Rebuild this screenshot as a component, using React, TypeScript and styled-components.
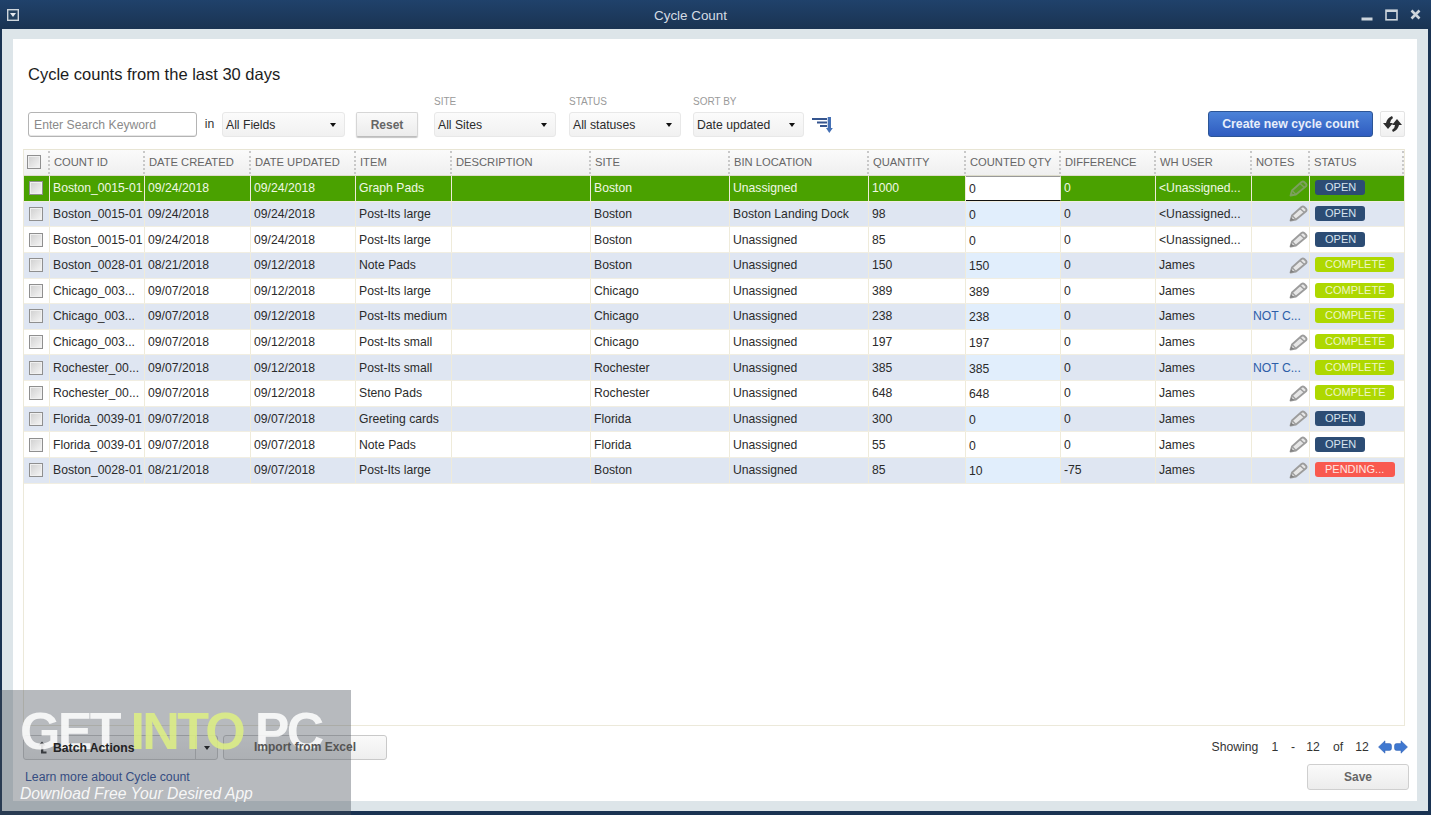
import React from "react";
import styled, { createGlobalStyle } from "styled-components";

const COLUMNS = "26px 95px 106px 105px 96px 139px 139px 139px 97px 95px 95px 96px 58px 1fr";

const GlobalStyle = createGlobalStyle`
  html, body {
    margin: 0;
    padding: 0;
    height: 100%;
    overflow: hidden;
    background: #1a3352;
  }
  body {
    font-family: "Liberation Sans", Arial, sans-serif;
    font-size: 12px;
    color: #2b2b2b;
  }
  #root {
    height: 100%;
  }
`;

const Frame = styled.div`
  position: relative;
  z-index: 0;
  display: flex;
  flex-direction: column;
  width: 1431px;
  height: 815px;
  overflow: hidden;
  background: #1a3352;
`;

const TitleBar = styled.div`
  display: flex;
  align-items: center;
  justify-content: space-between;
  height: 29px;
  flex: none;
  padding: 0 10px 0 7px;
  background: linear-gradient(#20426b, #1a3352);
`;

const TitleText = styled.div`
  position: absolute;
  left: 0;
  width: 1381px;
  top: 8px;
  text-align: center;
  font-size: 13.4px;
  line-height: 15px;
  color: #d5dce4;
`;

const WindowButtons = styled.div`
  display: flex;
  align-items: center;
  gap: 12px;
`;

const Body = styled.div`
  flex: 1;
  margin: 0 3px 4px 2px;
  padding: 10px 11px 10px 11px;
  background: #dde5e9;
  display: flex;
  min-height: 0;
`;

const Panel = styled.div`
  flex: 1;
  display: flex;
  flex-direction: column;
  padding: 25px 12px 0 10px;
  background: #fff;
  min-width: 0;
`;

const Heading = styled.h1`
  margin: 0 0 0 5px;
  font-size: 16.5px;
  line-height: 20px;
  font-weight: 400;
  color: #1c1c1c;
`;

const Toolbar = styled.div`
  display: flex;
  align-items: flex-end;
  height: 51px;
  margin-top: 2px;
  padding-left: 5px;
`;

const Field = styled.div<{ $left: number }>`
  display: flex;
  flex-direction: column;
  margin-left: ${(p) => p.$left}px;
`;

const FieldLabel = styled.label`
  font-size: 10px;
  line-height: 11px;
  height: 11px;
  margin-bottom: 5px;
  color: #9a9a9a;
`;

const SearchInput = styled.div`
  box-sizing: border-box;
  width: 169px;
  height: 25px;
  padding: 0 5px;
  border: 1px solid #b4b4b4;
  border-radius: 3px;
  font-size: 12.2px;
  line-height: 24px;
  color: #8a8a8a;
  box-shadow: inset 0 -1px 0 #e6e6e6;
`;

const InLabel = styled.span`
  width: 25px;
  height: 25px;
  line-height: 25px;
  text-align: center;
  font-size: 12.2px;
  color: #333;
`;

const Select = styled.div<{ $width: number }>`
  box-sizing: border-box;
  display: flex;
  align-items: center;
  justify-content: space-between;
  width: ${(p) => p.$width}px;
  height: 25px;
  padding: 0 8px 0 3px;
  border: 1px solid #e8e8e8;
  border-radius: 3px;
  background: linear-gradient(#fbfbfb, #f1f1f1);
  font-size: 12.2px;
  color: #2b2b2b;
`;

const Caret = styled.span`
  width: 0;
  height: 0;
  border-left: 3.5px solid transparent;
  border-right: 3.5px solid transparent;
  border-top: 4px solid #111;
`;

const ResetButton = styled.div`
  box-sizing: border-box;
  width: 62px;
  height: 25px;
  margin-left: 11px;
  border: 1px solid #d6d6d6;
  border-bottom-color: #bdbdbd;
  border-radius: 2px;
  background: linear-gradient(#fafafa, #ececec);
  box-shadow: 0 1px 1px #c4c4c4;
  text-align: center;
  line-height: 24px;
  font-size: 12px;
  font-weight: 700;
  color: #666;
`;

const SortIcon = styled.svg`
  margin: 0 0 4px 8px;
  flex: none;
`;

const Spacer = styled.div`
  flex: 1;
`;

const CreateButton = styled.div`
  box-sizing: border-box;
  width: 165px;
  height: 26px;
  border: 1px solid #2c5596;
  border-radius: 3px;
  background: linear-gradient(#4b82d8, #2f5cc0);
  text-align: center;
  line-height: 24px;
  font-size: 12.3px;
  font-weight: 700;
  color: #e8eefb;
`;

const RefreshButton = styled.div`
  box-sizing: border-box;
  display: flex;
  align-items: center;
  justify-content: center;
  width: 25px;
  height: 26px;
  margin-left: 7px;
  border: 1px solid #e4e4e4;
  border-radius: 2px;
  background: linear-gradient(#fff, #f0f0f0);
`;

const Table = styled.div`
  flex: 1;
  margin-top: 12px;
  border: 1px solid #ece9da;
  border-top-color: #e8e5d4;
  min-height: 0;
`;

const HeaderRow = styled.div`
  display: grid;
  grid-template-columns: ${COLUMNS};
  height: 25px;
  background: linear-gradient(#fbfbfb, #efefef);
  border-bottom: 1px solid #dddccb;
`;

const HeaderCell = styled.div`
  display: flex;
  align-items: center;
  padding: 0 0 2px 4px;
  border-right: 2px dotted #c8c8c8;
  margin: 1px 0;
  font-size: 11.2px;
  color: #666;
  white-space: nowrap;
  overflow: hidden;
`;

const HeaderCheck = styled(HeaderCell)`
  padding-left: 3px;
`;

const Row = styled.div<{ $tone: "green" | "blue" | "white" }>`
  display: grid;
  box-sizing: border-box;
  grid-template-columns: ${COLUMNS};
  height: 25.64px;
  border-bottom: 1px solid #f1eee2;
  color: ${(p) => (p.$tone === "green" ? "#f0f8e4" : "#2b2b2b")};
  background: ${(p) =>
    p.$tone === "green" ? "#4aa100" : p.$tone === "blue" ? "#dfe6f2" : "#fff"};
`;

const Cell = styled.div`
  display: flex;
  align-items: center;
  min-width: 0;
  padding-left: 3px;
  border-right: 1px solid #efebda;
  font-size: 12.2px;
  white-space: nowrap;
  overflow: hidden;
`;

const CheckCell = styled(Cell)`
  padding-left: 5px;
`;

const QtyCell = styled(Cell)<{ $tint: boolean; $editing: boolean }>`
  padding-top: 2px;
  box-sizing: border-box;
  background: ${(p) => (p.$editing ? "#fff" : p.$tint ? "#e1eefc" : "transparent")};
  color: #2b2b2b;
  border-bottom: ${(p) => (p.$editing ? "1px solid #111" : "0")};
  border-top: ${(p) => (p.$editing ? "1px solid #999" : "0")};
`;

const NotesCell = styled(Cell)`
  justify-content: flex-end;
  padding: 0 1px 0 0;
`;

const NotesText = styled.span`
  width: 100%;
  padding-left: 1px;
  color: #2d5ea8;
`;

const Box = styled.span`
  box-sizing: border-box;
  display: block;
  width: 14px;
  height: 14px;
  border: 1px solid #8f8f8f;
  background: linear-gradient(135deg, #cfcfcf, #f6f6f6);
  box-shadow: inset 0 0 0 1px #f0f0f0;
`;

const StatusCell = styled(Cell)`
  padding-left: 5px;
  border-right: 0;
`;

const PILL_COLORS = {
  OPEN: { bg: "#2c4c74", fg: "#d8e3ef", width: 50 },
  COMPLETE: { bg: "#aed800", fg: "#eef6c6", width: 79 },
  "PENDING...": { bg: "#f9594f", fg: "#ffe6e2", width: 80 },
};

const Pill = styled.span<{ $status: keyof typeof PILL_COLORS }>`
  display: block;
  box-sizing: border-box;
  width: ${(p) => PILL_COLORS[p.$status].width}px;
  height: 15px;
  margin-top: -1px;
  padding-left: 10px;
  border-radius: 3px;
  background: ${(p) => PILL_COLORS[p.$status].bg};
  color: ${(p) => PILL_COLORS[p.$status].fg};
  font-size: 11px;
  line-height: 14px;
`;

const Footer = styled.div`
  display: flex;
  justify-content: space-between;
  height: 75px;
  flex: none;
`;

const FooterLeft = styled.div`
  display: flex;
  flex-direction: column;
  padding: 9px 0 0 0;
`;

const ButtonRow = styled.div`
  display: flex;
  gap: 5px;
`;

const BatchButton = styled.div`
  box-sizing: border-box;
  display: flex;
  width: 195px;
  height: 25px;
  border: 1px solid #c9c9c9;
  border-radius: 3px;
  background: linear-gradient(#fafafa, #eeeeee);
`;

const BatchLabel = styled.div`
  flex: 1;
  display: flex;
  align-items: center;
  gap: 6px;
  padding-left: 13px;
  border-right: 1px solid #c9c9c9;
  font-size: 12.2px;
  font-weight: 700;
  color: #222;
`;

// sits above the watermark logo, as the button labels do in the screenshot
const OverLogo = styled.span`
  position: relative;
  z-index: 2;
`;

const BatchCaret = styled.div`
  width: 21px;
  display: flex;
  align-items: center;
  justify-content: center;
`;

const ImportButton = styled.div`
  box-sizing: border-box;
  width: 164px;
  height: 25px;
  border: 1px solid #c9c9c9;
  border-radius: 3px;
  background: linear-gradient(#fafafa, #eeeeee);
  text-align: center;
  line-height: 23px;
  font-size: 12px;
  font-weight: 700;
  color: #555;
`;

const LearnLink = styled.a`
  margin: 9px 0 0 2px;
  font-size: 12.3px;
  line-height: 16px;
  color: #2e4f9e;
`;

const FooterRight = styled.div`
  display: flex;
  flex-direction: column;
  align-items: flex-end;
  margin-right: -4px;
  padding-top: 13px;
`;

const Pager = styled.div`
  display: flex;
  align-items: center;
  height: 16px;
  margin-right: 1px;
  font-size: 12.2px;
  color: #333;
`;

const PagerPart = styled.span<{ $width: number }>`
  width: ${(p) => p.$width}px;
  text-align: center;
`;

const PagerArrows = styled.div`
  display: flex;
  gap: 2px;
`;

const SaveButton = styled.div`
  box-sizing: border-box;
  width: 102px;
  height: 26px;
  margin-top: 9px;
  border: 1px solid #cfcfcf;
  border-radius: 3px;
  background: linear-gradient(#fafafa, #ececec);
  text-align: center;
  line-height: 24px;
  font-size: 12px;
  font-weight: 700;
  color: #666;
`;

const Watermark = styled.div`
  position: absolute;
  left: 0;
  top: 690px;
  width: 351px;
  height: 125px;
  background: rgba(66, 74, 84, 0.38);
`;

const WatermarkLogo = styled.div`
  position: absolute;
  z-index: 1;
  left: 20px;
  top: 701px;
  font-size: 52px;
  line-height: 60px;
  font-weight: 700;
  letter-spacing: -2.7px;
  color: rgba(255, 255, 255, 0.85);
  white-space: nowrap;
`;

const LogoAccent = styled.span`
  color: rgba(222, 240, 130, 0.85);
`;

const WatermarkTagline = styled.div`
  position: absolute;
  left: 20px;
  top: 94px;
  font-size: 15.7px;
  line-height: 20px;
  font-style: italic;
  color: rgba(255, 255, 255, 0.9);
  white-space: nowrap;
`;

const HEADERS = [
  "COUNT ID",
  "DATE CREATED",
  "DATE UPDATED",
  "ITEM",
  "DESCRIPTION",
  "SITE",
  "BIN LOCATION",
  "QUANTITY",
  "COUNTED QTY",
  "DIFFERENCE",
  "WH USER",
  "NOTES",
  "STATUS",
];

type Status = keyof typeof PILL_COLORS;

interface RowData {
  id: string;
  created: string;
  updated: string;
  item: string;
  site: string;
  bin: string;
  qty: string;
  counted: string;
  diff: string;
  user: string;
  notes?: string;
  status: Status;
}

const ROWS: RowData[] = [
  { id: "Boston_0015-01", created: "09/24/2018", updated: "09/24/2018", item: "Graph Pads", site: "Boston", bin: "Unassigned", qty: "1000", counted: "0", diff: "0", user: "<Unassigned...", status: "OPEN" },
  { id: "Boston_0015-01", created: "09/24/2018", updated: "09/24/2018", item: "Post-Its large", site: "Boston", bin: "Boston Landing Dock", qty: "98", counted: "0", diff: "0", user: "<Unassigned...", status: "OPEN" },
  { id: "Boston_0015-01", created: "09/24/2018", updated: "09/24/2018", item: "Post-Its large", site: "Boston", bin: "Unassigned", qty: "85", counted: "0", diff: "0", user: "<Unassigned...", status: "OPEN" },
  { id: "Boston_0028-01", created: "08/21/2018", updated: "09/12/2018", item: "Note Pads", site: "Boston", bin: "Unassigned", qty: "150", counted: "150", diff: "0", user: "James", status: "COMPLETE" },
  { id: "Chicago_003...", created: "09/07/2018", updated: "09/12/2018", item: "Post-Its large", site: "Chicago", bin: "Unassigned", qty: "389", counted: "389", diff: "0", user: "James", status: "COMPLETE" },
  { id: "Chicago_003...", created: "09/07/2018", updated: "09/12/2018", item: "Post-Its medium", site: "Chicago", bin: "Unassigned", qty: "238", counted: "238", diff: "0", user: "James", notes: "NOT C...", status: "COMPLETE" },
  { id: "Chicago_003...", created: "09/07/2018", updated: "09/12/2018", item: "Post-Its small", site: "Chicago", bin: "Unassigned", qty: "197", counted: "197", diff: "0", user: "James", status: "COMPLETE" },
  { id: "Rochester_00...", created: "09/07/2018", updated: "09/12/2018", item: "Post-Its small", site: "Rochester", bin: "Unassigned", qty: "385", counted: "385", diff: "0", user: "James", notes: "NOT C...", status: "COMPLETE" },
  { id: "Rochester_00...", created: "09/07/2018", updated: "09/12/2018", item: "Steno Pads", site: "Rochester", bin: "Unassigned", qty: "648", counted: "648", diff: "0", user: "James", status: "COMPLETE" },
  { id: "Florida_0039-01", created: "09/07/2018", updated: "09/07/2018", item: "Greeting cards", site: "Florida", bin: "Unassigned", qty: "300", counted: "0", diff: "0", user: "James", status: "OPEN" },
  { id: "Florida_0039-01", created: "09/07/2018", updated: "09/07/2018", item: "Note Pads", site: "Florida", bin: "Unassigned", qty: "55", counted: "0", diff: "0", user: "James", status: "OPEN" },
  { id: "Boston_0028-01", created: "08/21/2018", updated: "09/07/2018", item: "Post-Its large", site: "Boston", bin: "Unassigned", qty: "85", counted: "10", diff: "-75", user: "James", status: "PENDING..." },
];

const PencilIcon = ({ faded }: { faded?: boolean }) => {
  const line = faded ? "#7da05f" : "#9c9c9c";
  return (
    <svg width="19" height="17" viewBox="0 0 19 17">
      <path
        d="M1.5 15.5 L3 10.5 L12.5 2 Q14 1 15.2 2 L17.2 4 Q18 5.2 17 6.3 L7 14.5 Z"
        fill={faded ? "#569f1c" : "#e6e6e6"}
        stroke={line}
        strokeWidth="1.8"
        strokeLinejoin="round"
      />
      <path d="M3 10.5 L7 14.5 M11 3.5 L15.5 7.6" stroke={line} strokeWidth="1.3" fill="none" />
      <path d="M1 16 L2.2 12.4 L5 15 Z" fill={faded ? "#7da05f" : "#808080"} />
    </svg>
  );
};

const ArrowIcon = ({ flip }: { flip?: boolean }) => (
  <svg width="14" height="14" viewBox="0 0 14 14" style={flip ? { transform: "scaleX(-1)" } : undefined}>
    <path d="M0.5 7 L7 0.8 V3.6 H11.5 Q13.5 3.6 13.5 5.6 V8.4 Q13.5 10.4 11.5 10.4 H7 V13.2 Z" fill="#3f78d0" stroke="#2f5fb0" strokeWidth="0.5" />
  </svg>
);

export default function App() {
  return (
    <Frame>
      <GlobalStyle />
      <TitleBar>
        <svg width="12" height="12" viewBox="0 0 12 12">
          <rect x="0.7" y="0.7" width="10.6" height="10.6" fill="#24425f" stroke="#cfd6dc" strokeWidth="1.4" />
          <path d="M3 4 H9 L6 8 Z" fill="#e6eaee" />
        </svg>
        <TitleText>Cycle Count</TitleText>
        <WindowButtons>
          <svg width="12" height="12" viewBox="0 0 12 12">
            <rect x="0.5" y="8.5" width="11" height="3" fill="#cdd5dc" />
          </svg>
          <svg width="13" height="12" viewBox="0 0 13 12">
            <rect x="1" y="1.2" width="11" height="9.6" fill="none" stroke="#cdd5dc" strokeWidth="1.6" />
            <rect x="1" y="1" width="11" height="2" fill="#cdd5dc" />
          </svg>
          <svg width="11" height="11" viewBox="0 0 11 11">
            <path d="M1.5 1.5 L9.5 9.5 M9.5 1.5 L1.5 9.5" stroke="#cdd5dc" strokeWidth="2.6" />
          </svg>
        </WindowButtons>
      </TitleBar>
      <Body>
        <Panel>
          <Heading>Cycle counts from the last 30 days</Heading>
          <Toolbar>
            <SearchInput>Enter Search Keyword</SearchInput>
            <InLabel>in</InLabel>
            <Select $width={123}>
              All Fields
              <Caret />
            </Select>
            <ResetButton>Reset</ResetButton>
            <Field $left={16}>
              <FieldLabel>SITE</FieldLabel>
              <Select $width={122}>
                All Sites
                <Caret />
              </Select>
            </Field>
            <Field $left={13}>
              <FieldLabel>STATUS</FieldLabel>
              <Select $width={112}>
                All statuses
                <Caret />
              </Select>
            </Field>
            <Field $left={12}>
              <FieldLabel>SORT BY</FieldLabel>
              <Select $width={111}>
                Date updated
                <Caret />
              </Select>
            </Field>
            <SortIcon width="21" height="17" viewBox="0 0 21 17">
              <path d="M0 2 H15 V4 H0 Z M5 5.5 H15 V7.5 H5 Z M8 9 H15 V11 H8 Z" fill="#35558f" />
              <path d="M15.7 1 H19 V12 H20.8 L17.3 17 L14 12 H15.7 Z" fill="#4570b4" />
            </SortIcon>
            <Spacer />
            <CreateButton>Create new cycle count</CreateButton>
            <RefreshButton>
              <svg width="19" height="18" viewBox="0 0 19 18">
                <path d="M0 8 H3 Q4 3 9 1 L10 3 Q7 5 7 8 H10 L5 14 Z" fill="#2e2e2e" />
                <path d="M19 10 H16 Q15 15 10 17 L9 15 Q12 13 12 10 H9 L14 4 Z" fill="#2e2e2e" />
              </svg>
            </RefreshButton>
          </Toolbar>
          <Table>
            <HeaderRow>
              <HeaderCheck>
                <Box />
              </HeaderCheck>
              {HEADERS.map((h) => (
                <HeaderCell key={h}>{h}</HeaderCell>
              ))}
            </HeaderRow>
            {ROWS.map((r, i) => {
              const selected = i === 0;
              const tone = selected ? "green" : i % 2 === 1 ? "blue" : "white";
              return (
                <Row key={i} $tone={tone}>
                  <CheckCell>
                    <Box />
                  </CheckCell>
                  <Cell>{r.id}</Cell>
                  <Cell>{r.created}</Cell>
                  <Cell>{r.updated}</Cell>
                  <Cell>{r.item}</Cell>
                  <Cell />
                  <Cell>{r.site}</Cell>
                  <Cell>{r.bin}</Cell>
                  <Cell>{r.qty}</Cell>
                  <QtyCell $tint={tone === "blue"} $editing={selected}>
                    {r.counted}
                  </QtyCell>
                  <Cell>{r.diff}</Cell>
                  <Cell>{r.user}</Cell>
                  <NotesCell>
                    {r.notes ? <NotesText>{r.notes}</NotesText> : <PencilIcon faded={selected} />}
                  </NotesCell>
                  <StatusCell>
                    <Pill $status={r.status}>{r.status}</Pill>
                  </StatusCell>
                </Row>
              );
            })}
          </Table>
          <Footer>
            <FooterLeft>
              <ButtonRow>
                <BatchButton>
                  <BatchLabel>
                    <svg width="10" height="13" viewBox="0 0 10 13">
                      <path d="M5 0.5 L8.5 4.5 H6.3 V10.5 H9.5 V12.5 H4 V4.5 H1.5 Z" fill="#333" />
                    </svg>
                    <OverLogo>Batch Actions</OverLogo>
                  </BatchLabel>
                  <BatchCaret>
                    <Caret />
                  </BatchCaret>
                </BatchButton>
                <ImportButton>
                  <OverLogo>Import from Excel</OverLogo>
                </ImportButton>
              </ButtonRow>
              <LearnLink>Learn more about Cycle count</LearnLink>
            </FooterLeft>
            <FooterRight>
              <Pager>
                <PagerPart $width={50}>Showing</PagerPart>
                <PagerPart $width={30}>1</PagerPart>
                <PagerPart $width={6}>-</PagerPart>
                <PagerPart $width={34}>12</PagerPart>
                <PagerPart $width={16}>of</PagerPart>
                <PagerPart $width={32}>12</PagerPart>
                <PagerArrows>
                  <ArrowIcon />
                  <ArrowIcon flip />
                </PagerArrows>
              </Pager>
              <SaveButton>Save</SaveButton>
            </FooterRight>
          </Footer>
        </Panel>
      </Body>
      <Watermark>
        <WatermarkTagline>Download Free Your Desired App</WatermarkTagline>
      </Watermark>
      <WatermarkLogo>
        GET <LogoAccent>INTO</LogoAccent> PC
      </WatermarkLogo>
    </Frame>
  );
}
